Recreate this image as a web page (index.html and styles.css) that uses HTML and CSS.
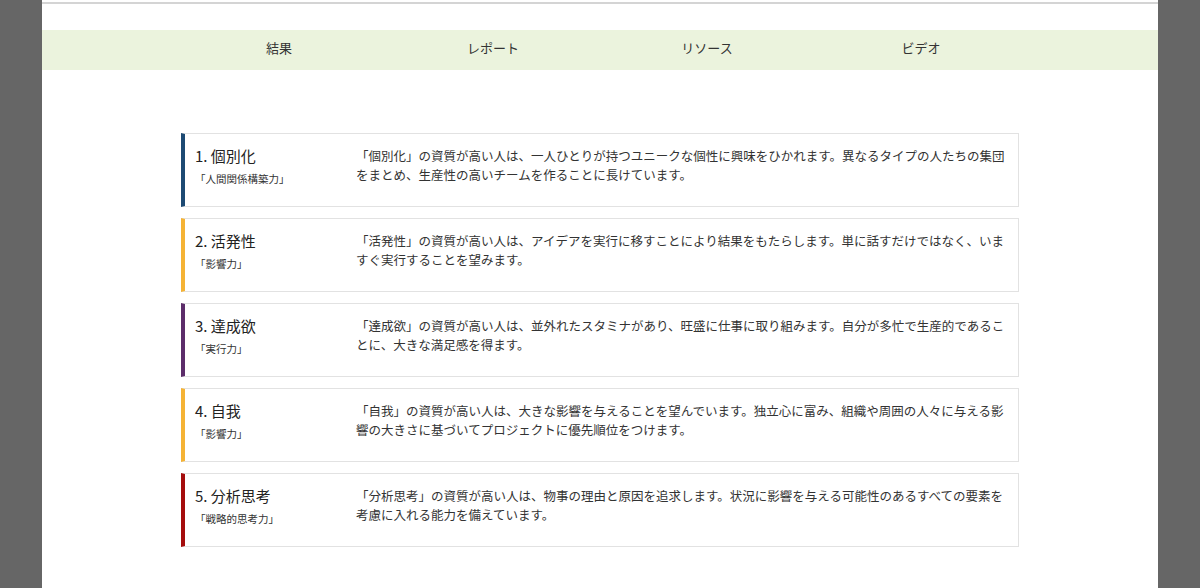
FILE: index.html
```html
<!DOCTYPE html>
<html lang="ja">
<head>
  <meta charset="UTF-8" />
  <meta name="viewport" content="width=device-width, initial-scale=1" />
  <title>資質</title>
  <link rel="stylesheet" href="styles.css">
</head>
<body>

<div class="page">
  <div class="topline"></div>

  <nav>
    <ul>
      <li><a href="#">結果</a></li>
      <li><a href="#">レポート</a></li>
      <li><a href="#">リソース</a></li>
      <li><a href="#">ビデオ</a></li>
    </ul>
  </nav>

  <!-- 上位5つの資質 -->
  <div class="themes">
    <div class="theme relationship">
      <div class="theme-head">
        <h3>1. 個別化</h3>
        <p class="domain">「人間関係構築力」</p>
      </div>
      <p class="theme-desc">「個別化」の資質が高い人は、一人ひとりが持つユニークな個性に興味をひかれます。異なるタイプの人たちの集団をまとめ、生産性の高いチームを作ることに長けています。</p>
    </div>

    <div class="theme influencing">
      <div class="theme-head">
        <h3>2. 活発性</h3>
        <p class="domain">「影響力」</p>
      </div>
      <p class="theme-desc">「活発性」の資質が高い人は、アイデアを実行に移すことにより結果をもたらします。単に話すだけではなく、いますぐ実行することを望みます。</p>
    </div>

    <div class="theme executing">
      <div class="theme-head">
        <h3>3. 達成欲</h3>
        <p class="domain">「実行力」</p>
      </div>
      <p class="theme-desc">「達成欲」の資質が高い人は、並外れたスタミナがあり、旺盛に仕事に取り組みます。自分が多忙で生産的であることに、大きな満足感を得ます。</p>
    </div>

    <div class="theme influencing">
      <div class="theme-head">
        <h3>4. 自我</h3>
        <p class="domain">「影響力」</p>
      </div>
      <p class="theme-desc">「自我」の資質が高い人は、大きな影響を与えることを望んでいます。独立心に富み、組織や周囲の人々に与える影響の大きさに基づいてプロジェクトに優先順位をつけます。</p>
    </div>

    <div class="theme strategic">
      <div class="theme-head">
        <h3>5. 分析思考</h3>
        <p class="domain">「戦略的思考力」</p>
      </div>
      <p class="theme-desc">「分析思考」の資質が高い人は、物事の理由と原因を追求します。状況に影響を与える可能性のあるすべての要素を考慮に入れる能力を備えています。</p>
    </div>
  </div>
</div>

</body>
</html>
```

FILE: styles.css
```css
  body {
    margin: 0;
    background-color: #666;
    font-family: "Noto Sans CJK JP", "Noto Sans", sans-serif;
    color: #333;
  }

  .page {
    width: 1116px;
    margin: 0 auto;
    min-height: 588px;
    background-color: #fff;
    padding-top: 2px;
  }

  .topline {
    height: 2px;
    background-color: #d4d4d4;
  }

  nav {
    margin-top: 26px;
    background-color: #ebf3dd;
    height: 40px;
  }

  nav ul {
    list-style: none;
    display: flex;
    justify-content: center;
    margin: 0;
    padding: 0;
  }

  nav ul li {
    width: 214px;
    text-align: center;
  }

  nav ul li a {
    display: block;
    line-height: 35px;
    font-size: 13px;
    color: #333;
    text-decoration: none;
  }

  /* 資質カード */
  .themes {
    width: 838px;
    margin: 63px auto 0;
  }

  .theme {
    display: flex;
    border: 1px solid #e2e2e2;
    border-left: 4px solid #ccc;
    margin-bottom: 11px;
    padding: 13px 8px 20px 10px;
  }

  .theme.relationship { border-left-color: #1d4a73; }
  .theme.influencing { border-left-color: #f5b335; }
  .theme.executing { border-left-color: #5c2d6a; }
  .theme.strategic { border-left-color: #a50d0d; }

  .theme-head {
    width: 161px;
    flex-shrink: 0;
  }

  .theme-head h3 {
    margin: 0;
    font-size: 15px;
    font-weight: 400;
    line-height: 18px;
    color: #222;
  }

  .domain {
    margin: 7px 0 0;
    font-size: 10.5px;
    line-height: 14px;
    color: #333;
  }

  .theme-desc {
    flex: 1;
    margin: 0;
    font-size: 12.5px;
    line-height: 18.5px;
    color: #333;
  }
```
